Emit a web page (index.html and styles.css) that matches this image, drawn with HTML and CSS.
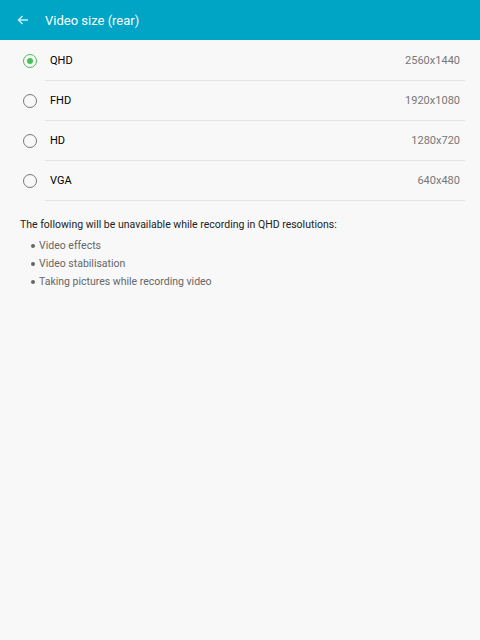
FILE: index.html
```html
<!DOCTYPE html>
<html>
  <head>
    <title>Video size (rear)</title>
    <link rel="stylesheet" href="styles.css">
  </head>
  <body>
    <div class="appbar">
      <svg class="back" width="12" height="10" viewBox="0 0 12 10">
        <path d="M11 5H1.5M5.5 1L1.5 5L5.5 9" fill="none" stroke="#c8f0f6" stroke-width="1.4"/>
      </svg>
      <span class="title">Video size (rear)</span>
    </div>

    <div class="list">
      <div class="row">
        <span class="radio checked"></span>
        <div class="row-body">
          <span class="label">QHD</span>
          <span class="value">2560x1440</span>
        </div>
      </div>
      <div class="row">
        <span class="radio"></span>
        <div class="row-body">
          <span class="label">FHD</span>
          <span class="value">1920x1080</span>
        </div>
      </div>
      <div class="row">
        <span class="radio"></span>
        <div class="row-body">
          <span class="label">HD</span>
          <span class="value">1280x720</span>
        </div>
      </div>
      <div class="row">
        <span class="radio"></span>
        <div class="row-body">
          <span class="label">VGA</span>
          <span class="value">640x480</span>
        </div>
      </div>
    </div>

    <div class="note">
      <p>The following will be unavailable while recording in QHD resolutions:</p>
      <ul>
        <li>Video effects</li>
        <li>Video stabilisation</li>
        <li>Taking pictures while recording video</li>
      </ul>
    </div>
  </body>
</html>
```

FILE: styles.css
```css
body {
  margin: 0;
  font-family: Roboto, "Noto Sans", sans-serif;
  background-color: #f8f8f8;
  width: 480px;
  height: 640px;
}

.appbar {
  height: 40px;
  background-color: #00a5c5;
  display: flex;
  align-items: center;
  padding-left: 17px;
}

.back {
  margin-right: 16px;
}

.title {
  color: #fff;
  font-size: 13px;
}

.list {
  padding-top: 1px;
}

.row {
  display: flex;
  align-items: stretch;
  height: 40px;
}

.radio {
  width: 12px;
  height: 12px;
  border: 1.3px solid #777;
  border-radius: 50%;
  margin: 13px 8px 0 23px;
  box-sizing: content-box;
  position: relative;
}

.radio.checked {
  border-color: #4cbf5a;
}

.radio.checked::after {
  content: "";
  position: absolute;
  left: 3px;
  top: 3px;
  width: 6px;
  height: 6px;
  border-radius: 50%;
  background-color: #4cbf5a;
}

.row-body {
  flex: 1;
  display: flex;
  justify-content: space-between;
  align-items: center;
  margin-right: 15px;
  padding: 0 5px;
  border-bottom: 1px solid #e4e4e4;
}

.row-body .label {
  font-size: 11px;
  color: #000;
}

.row-body .value {
  font-size: 11px;
  color: #777;
}

.note {
  padding: 17px 20px 0 20px;
  font-size: 10.5px;
}

.note p {
  margin: 0 0 6px;
  color: #222;
}

.note ul {
  margin: 0;
  padding-left: 10px;
  list-style: none;
}

.note li {
  color: #666;
  line-height: 18px;
}

.note li::before {
  content: "";
  display: inline-block;
  width: 4px;
  height: 4px;
  border-radius: 50%;
  background-color: #666;
  margin: 0 4px 1px 1px;
}
```
